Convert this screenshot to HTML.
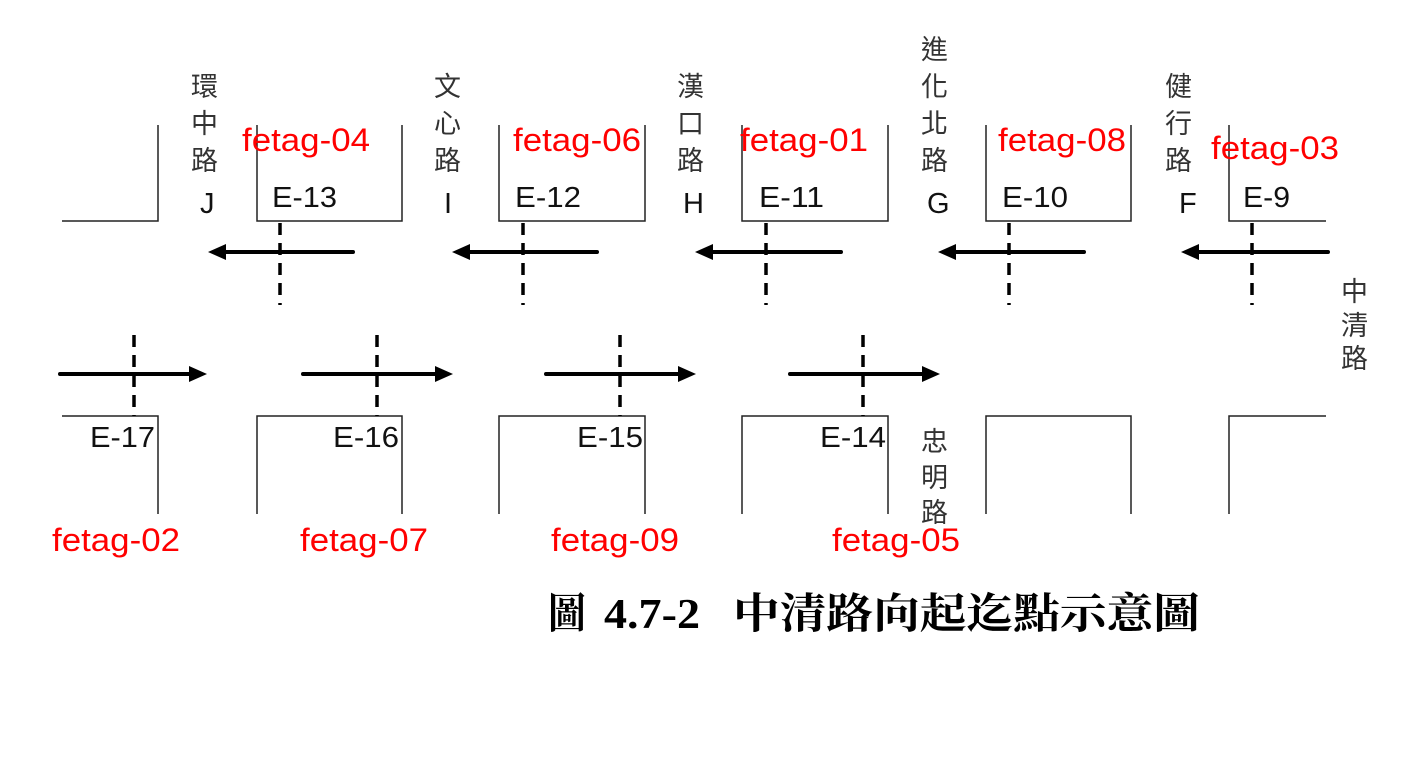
<!DOCTYPE html>
<html><head><meta charset="utf-8"><style>
body{margin:0;background:#fff;}
svg{display:block}
.l{font-family:"Liberation Sans","Noto Sans CJK TC",sans-serif;font-size:29px;fill:#111}
.r{font-family:"Liberation Sans",sans-serif;font-size:32px;fill:#ff0000}
.v{font-family:"Noto Sans CJK TC",sans-serif;font-size:27px;fill:#333}
.c{font-family:"Liberation Serif","Noto Serif CJK SC",serif;font-size:42px;font-weight:bold;fill:#000}
</style></head><body>
<svg width="1407" height="773" viewBox="0 0 1407 773">
<g stroke="#222" stroke-width="1.5" fill="none">
<path d="M62 221H158V125"/>
<path d="M257 125V221H402V125"/>
<path d="M499 125V221H645V125"/>
<path d="M742 125V221H888V125"/>
<path d="M986 125V221H1131V125"/>
<path d="M1229 125V221H1326"/>
<path d="M62 416H158V514"/>
<path d="M257 514V416H402V514"/>
<path d="M499 514V416H645V514"/>
<path d="M742 514V416H888V514"/>
<path d="M986 514V416H1131V514"/>
<path d="M1229 514V416H1326"/>
</g>
<g stroke="#000" stroke-width="3.5" stroke-dasharray="12,8">
<path d="M280 223V305M523 223V305M766 223V305M1009 223V305M1252 223V305"/>
<path d="M134 335V416M377 335V416M620 335V416M863 335V416"/>
</g>
<g stroke="#000" stroke-width="4" stroke-linecap="round">
<path d="M353 252H222M597 252H466M841 252H709M1084 252H952M1328 252H1195"/>
<path d="M60 374H192M303 374H438M546 374H681M790 374H925"/>
</g>
<g fill="#000">
<path d="M208 252L226 244V260Z"/><path d="M452 252L470 244V260Z"/><path d="M695 252L713 244V260Z"/><path d="M938 252L956 244V260Z"/><path d="M1181 252L1199 244V260Z"/>
<path d="M207 374L189 366V382Z"/><path d="M453 374L435 366V382Z"/><path d="M696 374L678 366V382Z"/><path d="M940 374L922 366V382Z"/>
</g>
<g class="l" lengthAdjust="spacingAndGlyphs">
<text x="272" y="207" textLength="65" lengthAdjust="spacingAndGlyphs">E-13</text><text x="515" y="207" textLength="66" lengthAdjust="spacingAndGlyphs">E-12</text><text x="759" y="207" textLength="65" lengthAdjust="spacingAndGlyphs">E-11</text><text x="1002" y="207" textLength="66" lengthAdjust="spacingAndGlyphs">E-10</text><text x="1243" y="207" textLength="47" lengthAdjust="spacingAndGlyphs">E-9</text>
<text x="90" y="447" textLength="65" lengthAdjust="spacingAndGlyphs">E-17</text><text x="333" y="447" textLength="66" lengthAdjust="spacingAndGlyphs">E-16</text><text x="577" y="447" textLength="66" lengthAdjust="spacingAndGlyphs">E-15</text><text x="820" y="447" textLength="66" lengthAdjust="spacingAndGlyphs">E-14</text>
<text x="200" y="213">J</text><text x="444" y="213">I</text><text x="683" y="213">H</text><text x="927" y="213">G</text><text x="1179" y="213">F</text>
</g>
<g class="r">
<text x="242" y="151" textLength="128" lengthAdjust="spacingAndGlyphs">fetag-04</text><text x="513" y="151" textLength="128" lengthAdjust="spacingAndGlyphs">fetag-06</text><text x="740" y="151" textLength="128" lengthAdjust="spacingAndGlyphs">fetag-01</text><text x="998" y="151" textLength="128" lengthAdjust="spacingAndGlyphs">fetag-08</text><text x="1211" y="159" textLength="128" lengthAdjust="spacingAndGlyphs">fetag-03</text>
<text x="52" y="551" textLength="128" lengthAdjust="spacingAndGlyphs">fetag-02</text><text x="300" y="551" textLength="128" lengthAdjust="spacingAndGlyphs">fetag-07</text><text x="551" y="551" textLength="128" lengthAdjust="spacingAndGlyphs">fetag-09</text><text x="832" y="551" textLength="128" lengthAdjust="spacingAndGlyphs">fetag-05</text>
</g>
<g class="v">
<text x="191" y="96">環</text><text x="191" y="133">中</text><text x="191" y="170">路</text>
<text x="434" y="96">文</text><text x="434" y="133">心</text><text x="434" y="170">路</text>
<text x="677" y="96">漢</text><text x="677" y="133">口</text><text x="677" y="170">路</text>
<text x="921" y="59">進</text><text x="921" y="96">化</text><text x="921" y="133">北</text><text x="921" y="170">路</text>
<text x="1165" y="96">健</text><text x="1165" y="133">行</text><text x="1165" y="170">路</text>
<text x="1341" y="301">中</text><text x="1341" y="335">清</text><text x="1341" y="368">路</text>
<text x="921" y="451">忠</text><text x="921" y="487">明</text><text x="921" y="522">路</text>
</g>
<text class="c" x="548" y="628" textLength="38" lengthAdjust="spacingAndGlyphs">圖</text>
<text class="c" x="604" y="628" textLength="96" lengthAdjust="spacingAndGlyphs">4.7-2</text>
<text class="c" x="733" y="628" textLength="467" lengthAdjust="spacingAndGlyphs">中清路向起迄點示意圖</text>
</svg>
</body></html>
